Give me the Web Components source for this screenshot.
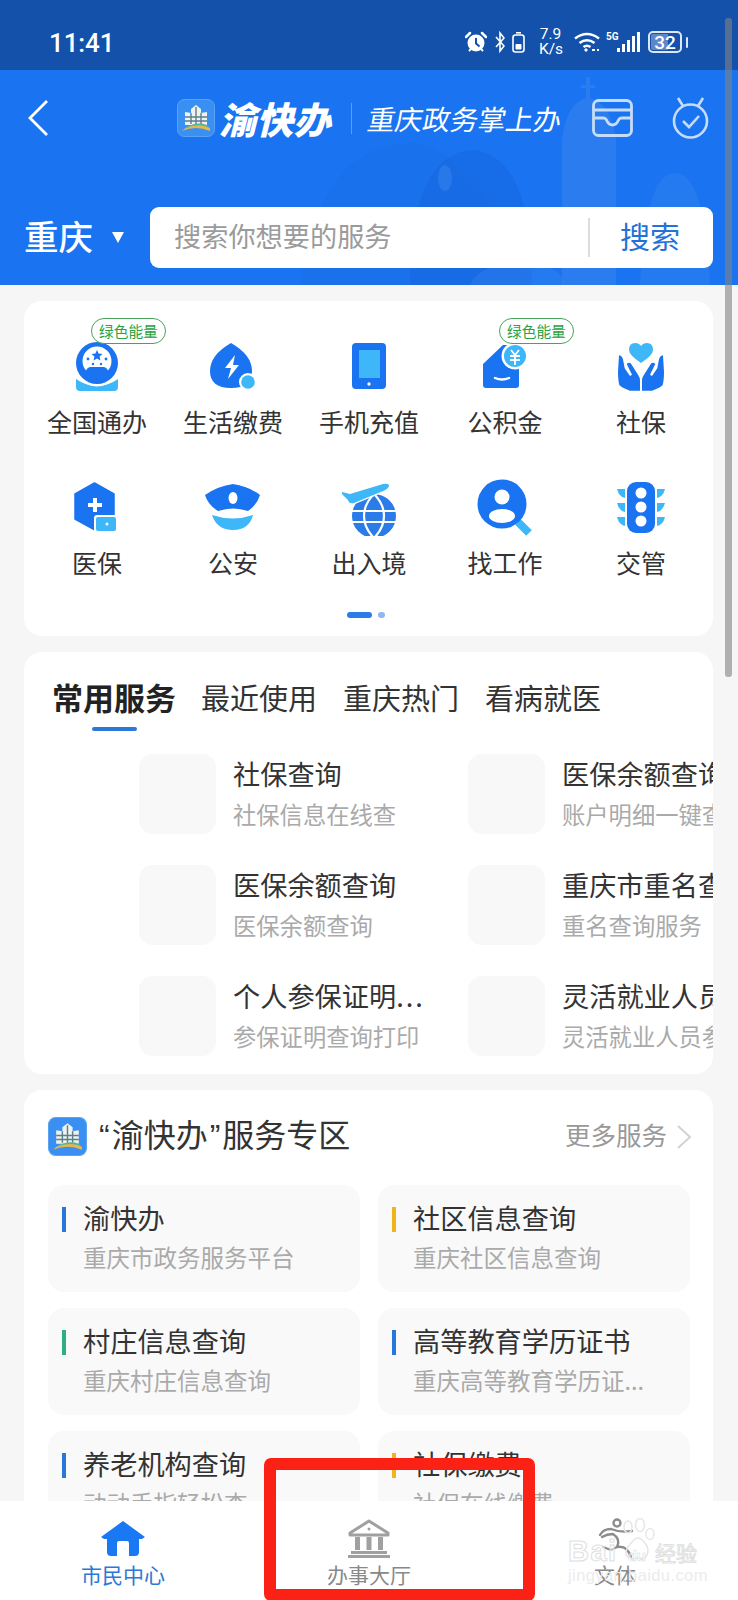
<!DOCTYPE html>
<html lang="zh">
<head>
<meta charset="utf-8">
<title>渝快办</title>
<style>
html, body { margin: 0; padding: 0; }
body { background: #f6f6f6; font-family: "Noto Sans CJK SC", "Noto Sans", sans-serif; color: #333; }
</style>
</head>
<body>
<phone-page>
  <status-bar></status-bar>
  <top-header></top-header>
  <page-main>
    <quick-card>
      <quick-item>
        <span slot="badge">绿色能量</span>
        <svg slot="icon" viewBox="0 0 60 60"><path d="M9 44q10 7 21 7t21-7v8q0 4-4 4H13q-4 0-4-4z" fill="#3db7f7"/><circle cx="30" cy="28" r="23.500" fill="#fff"/><circle cx="30" cy="28" r="21" fill="#1a73f0"/><circle cx="30" cy="26" r="14.500" fill="#fff"/><path d="M18 42q0-9 5-10h14q5 1 5 10-6 4-12 4t-12-4z" fill="#1a73f0"/><path d="M30 15l1.600 3.600 3.900.4-2.900 2.600.8 3.800-3.400-2-3.400 2 .8-3.800-2.900-2.600 3.900-.4z" fill="#1a73f0"/><circle cx="21" cy="24" r="1.400" fill="#1a73f0"/><circle cx="39" cy="24" r="1.400" fill="#1a73f0"/><circle cx="26" cy="29" r="1.200" fill="#1a73f0"/><circle cx="34" cy="29" r="1.200" fill="#1a73f0"/></svg>
        全国通办
      </quick-item>
      <quick-item>
        <svg slot="icon" viewBox="0 0 60 60"><path d="M28 8q21 12 21 28 0 17-21 17T7 36Q7 20 28 8z" fill="#1a73f0"/><path d="M32 20L22 33h6l-3 11 11-14h-6z" fill="#fff"/><circle cx="45" cy="47" r="9" fill="#fff"/><circle cx="45" cy="47" r="6.800" fill="#3db7f7"/></svg>
        生活缴费
      </quick-item>
      <quick-item>
        <svg slot="icon" viewBox="0 0 60 60"><rect x="13" y="8" width="34" height="46" rx="4" fill="#1a73f0"/><rect x="20" y="15" width="21" height="28" fill="#3db7f7"/><circle cx="30" cy="49" r="1.700" fill="#fff"/></svg>
        手机充值
      </quick-item>
      <quick-item>
        <span slot="badge">绿色能量</span>
        <svg slot="icon" viewBox="0 0 60 60"><path d="M8 29L28 10h16v40q0 3-3 3H11q-3 0-3-3z" fill="#1a73f0"/><path d="M20 43q7 3 14 0" fill="none" stroke="#fff" stroke-width="2.400" stroke-linecap="round"/><circle cx="40" cy="21" r="13.500" fill="#fff"/><circle cx="40" cy="21" r="11" fill="#3db7f7"/><path d="M36 15l4 5 4-5M35 21h10M35 25h10M40 20v10" fill="none" stroke="#fff" stroke-width="1.800"/></svg>
        公积金
      </quick-item>
      <quick-item>
        <svg slot="icon" viewBox="0 0 60 60"><path d="M30 28Q18 20 18 15q0-7 6-7 4 0 6 3 2-3 6-3 6 0 6 7 0 5-12 13z" fill="#3db7f7"/><path d="M8 20.300q3.500.5 4.300 5.400l1.400 7.600L19 41l2-1.300L15.700 29q2-2 4-.7L27 39.700q2 2.600 2 6v10h-10Q9.500 52 8.300 50 7 45 7 36.700z" fill="#1a73f0"/><path d="M52 20.300q-3.500.5-4.300 5.400l-1.400 7.600L41 41l-2-1.300L44.300 29q-2-2-4-.7L33 39.700q-2 2.600-2 6v10h10Q50.500 52 51.700 50 53 45 53 36.700z" fill="#1a73f0"/></svg>
        社保
      </quick-item>
      <quick-item>
        <svg slot="icon" viewBox="0 -2 60 60"><path d="M27.500 5L47 16v24l-19 12-20-11V16z" fill="#1a73f0" stroke="#1a73f0" stroke-width="1.500" stroke-linejoin="round"/><path d="M28 20v14M21 27h14" stroke="#fff" stroke-width="4"/><rect x="27" y="37" width="24" height="18" rx="3" fill="#fff"/><rect x="29" y="39" width="20" height="14" rx="2" fill="#3db7f7"/><circle cx="40" cy="46" r="1.500" fill="#fff"/></svg>
        医保
      </quick-item>
      <quick-item>
        <svg slot="icon" viewBox="0 -2 60 60"><path d="M30 6q15 2 27 11-3 10-12 16-15-5-30 0Q5 27 2 17 15 8 30 6z" fill="#1a73f0"/><ellipse cx="30" cy="20" rx="4.500" ry="6" fill="#fff"/><path d="M9 37q21 7 41 0-4 15-20 15T9 37z" fill="#3db7f7"/></svg>
        公安
      </quick-item>
      <quick-item>
        <svg slot="icon" viewBox="0 -2 60 60"><circle cx="35" cy="38" r="22" fill="#2b7be8"/><path d="M13 33h44M13 44h44M35 16q-10 10-10 22t10 22q10-10 10-22t-10-22z" fill="none" stroke="#fff" stroke-width="2.200"/><path d="M3 14l8 2 33-10q6-1 6 2-1 3-6 5L15 25q-5 1-6-3L3 16z" fill="#fff" stroke="#fff" stroke-width="2.500"/><path d="M3 14l8 2 33-10q6-1 6 2-1 3-6 5L15 25q-5 1-6-3L3 16z" fill="#3db7f7"/></svg>
        出入境
      </quick-item>
      <quick-item>
        <svg slot="icon" viewBox="0 -2 60 60"><path d="M43 44l11 11" stroke="#3db7f7" stroke-width="8"/><circle cx="27" cy="26" r="24.500" fill="#1a73f0"/><circle cx="27" cy="19" r="7.500" fill="#fff"/><ellipse cx="27" cy="38" rx="13" ry="7" fill="#fff"/></svg>
        找工作
      </quick-item>
      <quick-item>
        <svg slot="icon" viewBox="0 -2 60 60"><rect x="16" y="4" width="28" height="51" rx="9" fill="#1a73f0"/><circle cx="30" cy="15" r="5.500" fill="#fff"/><circle cx="30" cy="29" r="5.500" fill="#fff"/><circle cx="30" cy="43" r="5.500" fill="#fff"/><g fill="#3db7f7"><path d="M6 11h8v9q-6-1-8-9zM6 25h8v9q-6-1-8-9zM6 39h8v9q-6-1-8-9zM54 11h-8v9q6-1 8-9zM54 25h-8v9q6-1 8-9zM54 39h-8v9q6-1 8-9z"/></g></svg>
        交管
      </quick-item>
    </quick-card>

    <service-card>
      <service-row><span slot="title">社保查询</span><span slot="sub">社保信息在线查</span></service-row>
      <service-row><span slot="title">医保余额查询</span><span slot="sub">账户明细一键查询</span></service-row>
      <service-row><span slot="title">医保余额查询</span><span slot="sub">医保余额查询</span></service-row>
      <service-row><span slot="title">重庆市重名查询</span><span slot="sub">重名查询服务</span></service-row>
      <service-row><span slot="title">个人参保证明<span style="letter-spacing:2px">...</span></span><span slot="sub">参保证明查询打印</span></service-row>
      <service-row><span slot="title">灵活就业人员参保</span><span slot="sub">灵活就业人员参保查询</span></service-row>
    </service-card>

    <zone-card>
      <zone-tile style="--bar:#2878dc"><span slot="title">渝快办</span><span slot="sub">重庆市政务服务平台</span></zone-tile>
      <zone-tile style="--bar:#f0b41c"><span slot="title">社区信息查询</span><span slot="sub">重庆社区信息查询</span></zone-tile>
      <zone-tile style="--bar:#2fae7f"><span slot="title">村庄信息查询</span><span slot="sub">重庆村庄信息查询</span></zone-tile>
      <zone-tile style="--bar:#2878dc"><span slot="title">高等教育学历证书</span><span slot="sub">重庆高等教育学历证...</span></zone-tile>
      <zone-tile style="--bar:#2878dc"><span slot="title">养老机构查询</span><span slot="sub">动动手指轻松查</span></zone-tile>
      <zone-tile style="--bar:#f0b41c"><span slot="title">社保缴费</span><span slot="sub">社保在线缴费</span></zone-tile>
    </zone-card>
  </page-main>

  <tab-bar>
    <tab-item active>
      <svg slot="icon" width="44" height="36" viewBox="0 0 44 36" style="margin-bottom:2px"><path d="M22 0l22 16-3 2h-3v13q0 4-4 4h-6V22q0-2-2-2h-8q-2 0-2 2v13h-6q-4 0-4-4V18H3l-3-2z" fill="#1a78f5"/></svg>
      市民中心
    </tab-item>
    <tab-item>
      <svg slot="icon" width="44" height="40" viewBox="0 0 44 40" fill="#a0a0a0"><path d="M22 2l19 12v2H3v-2z" fill="none" stroke="#a0a0a0" stroke-width="3" stroke-linejoin="round"/><circle cx="22" cy="10" r="1.500"/><rect x="8" y="18" width="5" height="13"/><rect x="19.500" y="18" width="5" height="13"/><rect x="31" y="18" width="5" height="13"/><rect x="4" y="32" width="36" height="3"/><rect x="1" y="36" width="42" height="3"/></svg>
      办事大厅
    </tab-item>
    <tab-item>
      <svg slot="icon" width="44" height="42" viewBox="0 0 44 42" fill="none" stroke="#8c8c8c" stroke-width="2.400" stroke-linecap="round" stroke-linejoin="round"><circle cx="24" cy="6" r="3.500"/><path d="M7 18q3-6 11-6 10 4 21 2M9 20q5-3 11-3 8 5 4 13l-6 3-8-3M24 30q10-2 14 10"/></svg>
      文体
    </tab-item>
  </tab-bar>

  <baidu-mark></baidu-mark>
  <red-box></red-box>
  <scroll-thumb></scroll-thumb>
</phone-page>

<script>
function defineElement(name, html) {
  const template = document.createElement('template');
  template.innerHTML = html;
  customElements.define(name, class extends HTMLElement {
    constructor() {
      super();
      this.attachShadow({ mode: 'open' });
      this.shadowRoot.appendChild(template.content.cloneNode(true));
    }
  });
}

defineElement('phone-page', `
<style>
:host{ display: block; position: relative; width: 738px; height: 1600px; overflow: hidden; background: #f6f6f6; }
</style>
<slot></slot>`);

defineElement('status-bar', `
<style>
:host{ display: flex; align-items: center; height: 70px; padding: 0 50px 0 49px; box-sizing: border-box; background: #1351ab; color: #fff; font-family: Roboto, sans-serif; }
#time { font-size: 26px; font-weight: 500; letter-spacing: -.1px; margin-top: 15px; line-height: 30px; }
#icons { margin-left: auto; display: flex; align-items: center; margin-top: 14px; height: 24px; }
svg { display: block; }
#speed { margin: 0 12px 0 14px; width: 23px; font-size: 15.5px; line-height: 15px; text-align: center; }
#net { font-size: 10px; font-weight: 700; align-self: flex-start; margin: 2px 0 0 6px; line-height: 10px; width: 11px; }
#batt { position: relative; width: 34px; height: 22px; margin-left: 8px; border: 2px solid #dce8f8; border-radius: 5px; box-sizing: border-box; display: flex; align-items: center; justify-content: center; font-size: 19px; font-weight: 500; background: linear-gradient(90deg, #5f86c6 60%, transparent 60%); background-clip: content-box; padding: 1px; }
#tip { width: 2px; height: 11px; margin-left: 4px; background: #dce8f8; border-radius: 1px; }
</style>
<div id="time">11:41</div>
<div id="icons">
  <svg width="22" height="22" viewBox="0 0 22 22" style="margin-right:8px"><circle cx="11" cy="12" r="8.500" fill="#fff"/><path d="M11 7v5.500l3.500 3" fill="none" stroke="#1351ab" stroke-width="2"/><path d="M1 6l4-4M21 6l-4-4" stroke="#fff" stroke-width="2.500" stroke-linecap="round"/><path d="M4 20l2-2M18 20l-2-2" stroke="#fff" stroke-width="2"/></svg>
  <svg width="10" height="22" viewBox="0 0 10 22" style="margin-right:7px"><path d="M1 6l8 9-4 5V2l4 5-8 9" fill="none" stroke="#fff" stroke-width="1.600"/></svg>
  <svg width="13" height="22" viewBox="0 0 13 22"><rect x="1" y="4" width="11" height="17" rx="2.500" fill="none" stroke="#fff" stroke-width="1.600"/><rect x="4" y="1" width="5" height="1.600" fill="#fff"/><rect x="3.500" y="13" width="6" height="5.500" rx="1" fill="#fff"/></svg>
  <div id="speed">7.9<br>K/s</div>
  <svg width="26" height="20" viewBox="0 0 26 20" fill="none" stroke="#fff" stroke-width="2.600"><path d="M1 6.500q12-9 24 0M5.500 11q7.500-5.500 15 0M9.500 15q3.500-2.500 7 0"/><circle cx="12" cy="18" r="1.200" fill="#fff" stroke-width="1"/><path d="M18 18h3M23 18h2" stroke-width="1.800"/></svg>
  <div id="net">5G</div>
  <svg width="23" height="22" viewBox="0 0 23 22" fill="#fff"><rect x="0" y="17" width="3" height="4"/><rect x="5" y="13" width="3" height="8"/><rect x="10" y="9" width="3" height="12"/><rect x="15" y="5" width="3" height="16"/><rect x="20" y="1" width="3" height="20"/></svg>
  <div id="batt">32</div>
  <div id="tip"></div>
</div>`);

defineElement('app-logo', `
<style>
:host{ display: block; width: 38px; height: 38px; }
svg { display: block; width: 100%; height: 100%; }
</style>
<svg viewBox="0 0 38 38">
  <rect x=".5" y=".5" width="37" height="37" rx="7" fill="#3a90f2" stroke="#5ba4f5"/>
  <path d="M8 13l6 1V10l5-4 5 4v4l6-1v13H8z" fill="#eef3ee"/>
  <path d="M14 14v11M19 8v17M24 14v11M8 18h22M8 22h22" stroke="#5c7f8e" stroke-width="1.400" fill="none"/>
  <path d="M5 32q12-12 28-3v3q-14-6-28 0z" fill="#e8b64a"/>
  <path d="M9 29q10-7 21-3l2 2q-12-4-23 1z" fill="#4cb7a0"/>
</svg>`);

defineElement('top-header', `
<style>
:host{ display: block; position: relative; height: 215px; background: #1a73f0; color: #fff; overflow: hidden; }
#deco { position: absolute; left: 0; top: 0; }
#nav, #search { position: relative; display: flex; align-items: center; }
#nav { height: 48px; padding: 24px 29px 0 28px; }
#brand { display: flex; align-items: center; margin-left: 129px; }
#word { width: 112px; margin-left: 8px; font-size: 37px; font-weight: 900; line-height: 48px; letter-spacing: .3px; transform: skewX(-14deg); white-space: nowrap; }
#line { width: 1px; height: 31px; margin: 0 16px; background: rgba(255,255,255,.3); }
#slogan { font-size: 27.7px; line-height: 40px; white-space: nowrap; transform: skewX(-10deg); }
#wallet { margin-left: auto; }
#watch { margin-left: 39px; }
svg { display: block; }
#search { margin-top: 65px; height: 61px; padding: 0 25px 0 24px; }
#city { font-size: 34.5px; line-height: 57px; height: 61px; font-weight: 500; }
#arrow { width: 0; height: 0; margin-left: 19px; border: 6px solid transparent; border-top: 11px solid #fff; border-bottom: 0; }
#box { flex: 1; margin-left: 26px; height: 61px; display: flex; align-items: center; background: #fff; border-radius: 9px; }
#hint { flex: 1; padding: 0 0 6px 24px; font-size: 27.2px; color: #9b9b9b; }
#sep { width: 2px; height: 39px; background: #dcdcdc; }
#go { width: 123px; padding: 0 0 6px 30px; box-sizing: border-box; font-size: 30px; color: #2272d8; }
</style>
<svg id="deco" width="738" height="215" viewBox="0 70 738 215">
  <path d="M300 285q20-140 110-142 60 0 120 142z" fill="#1c6de6" opacity=".3"/>
  <path d="M410 285q0-130 62-135 60 5 60 135z" fill="#176ae2" opacity=".7"/>
  <ellipse cx="445" cy="178" rx="7" ry="13" fill="#3a86ee" opacity=".5"/>
  <path d="M470 285q10-22 50-22t45 22z" fill="#3a86ee" opacity=".35"/>
  <path d="M562 285V140q4-36 24-42v-10h-5v-3h5v-8h4v8h5v3h-5v10q22 6 26 42v145z" fill="#3a86ee" opacity=".5"/>
  <path d="M640 285q5-112 35-112t35 112z" fill="#3a86ee" opacity=".35"/>
</svg>
<div id="nav">
  <svg width="20" height="36" viewBox="0 0 20 36"><path d="M19 1L2 18l17 17" fill="none" stroke="#fff" stroke-width="2.800"/></svg>
  <div id="brand">
    <app-logo></app-logo>
    <div id="word">渝快办</div>
    <div id="line"></div>
    <div id="slogan">重庆政务掌上办</div>
  </div>
  <svg id="wallet" width="41" height="38" viewBox="0 0 41 38" fill="none" stroke="#c5dcfb" stroke-width="2.800"><rect x="1.500" y="1.500" width="38" height="35" rx="5"/><path d="M1.500 11h38M1.500 19h10q2 0 3 2 2 5 6 5t6-5q1-2 3-2h10"/></svg>
  <svg id="watch" width="37" height="42" viewBox="0 0 37 42" fill="none" stroke="#c5dcfb" stroke-width="2.600"><circle cx="18.500" cy="24" r="16.500"/><path d="M6 1l5 8M31 1l-5 8M11 24l6 6 10-11"/></svg>
</div>
<div id="search">
  <div id="city">重庆</div>
  <div id="arrow"></div>
  <div id="box">
    <div id="hint">搜索你想要的服务</div>
    <div id="sep"></div>
    <div id="go">搜索</div>
  </div>
</div>`);

defineElement('page-main', `
<style>
:host{ display: flex; flex-direction: column; gap: 16px; padding: 16px 25px 0 24px; }
</style>
<slot></slot>`);

defineElement('quick-card', `
<style>
:host{ display: block; height: 335px; box-sizing: border-box; padding: 34px 4px 0 5px; background: #fff; border-radius: 18px; }
#grid { display: grid; grid-template-columns: repeat(5, 136px); row-gap: 34px; }
#dots { display: flex; justify-content: center; gap: 6px; margin: 29px 0 0 -7px; }
#dots i { display: block; height: 6px; width: 7px; border-radius: 3px; background: #8fb8ee; }
#dots i:first-child { width: 25px; background: #2b7be8; }
</style>
<div id="grid"><slot></slot></div>
<div id="dots"><i></i><i></i></div>`);

defineElement('quick-item', `
<style>
:host{ display: flex; flex-direction: column; align-items: center; position: relative; height: 107px; font-size: 25px; line-height: 36px; color: #333; white-space: nowrap; }
::slotted([slot=icon]) { display: block; width: 60px; height: 60px; margin-bottom: 8px; }
#badge { position: absolute; left: 62px; top: -17px; z-index: 1; }
::slotted([slot=badge]) { display: block; height: 24px; padding: 0 7px; font-size: 14.7px; line-height: 23px; color: #2aa340; background: #fff; border: 1px solid #4aa35a; border-radius: 13px; }
</style>
<div id="badge"><slot name="badge"></slot></div>
<slot name="icon"></slot>
<slot></slot>`);

defineElement('service-card', `
<style>
:host{ display: block; height: 422px; box-sizing: border-box; padding-top: 25px; background: #fff; border-radius: 18px; overflow: hidden; }
#tabs { display: flex; padding-left: 28px; gap: 26px; font-size: 29px; line-height: 40px; color: #333; }
#on { display: flex; flex-direction: column; align-items: center; gap: 10px; margin-right: -1px; font-size: 31px; font-weight: 700; color: #222; }
#on i { display: block; width: 45px; height: 4px; border-radius: 2px; background: #2b78d8; }
#list { display: grid; grid-template-columns: 329px 329px; row-gap: 31px; margin: 23px 0 0 115px; width: 658px; }
</style>
<div id="tabs">
  <div id="on">常用服务<i></i></div>
  <div>最近使用</div>
  <div>重庆热门</div>
  <div>看病就医</div>
</div>
<div id="list"><slot></slot></div>`);

defineElement('service-row', `
<style>
:host{ display: flex; gap: 18px; height: 80px; white-space: nowrap; }
#tile { flex: none; width: 77px; height: 80px; border-radius: 14px; background: #f8f8f8; }
#title { margin: 1px 0 0 -1px; font-size: 27.2px; line-height: 36px; color: #333; }
#sub { margin: 8px 0 0 -1px; font-size: 23.3px; line-height: 30px; color: #aaa; }
</style>
<div id="tile"></div>
<div>
  <div id="title"><slot name="title"></slot></div>
  <div id="sub"><slot name="sub"></slot></div>
</div>`);

defineElement('zone-card', `
<style>
:host{ display: block; height: 520px; box-sizing: border-box; padding: 27px 23px 0 24px; background: #fff; border-radius: 18px; }
#head { display: flex; align-items: center; height: 39px; }
#title { margin: -4px 0 0 10px; font-size: 32px; line-height: 39px; color: #333; white-space: nowrap; }
#title b { font-family: "Liberation Sans", sans-serif; font-weight: 400; padding: 0 2px; }
#more { margin: -6px 0 0 auto; font-size: 25.5px; color: #999; }
#chev { margin: 0 -2px 0 9px; display: block; }
#grid { display: grid; grid-template-columns: 312px 312px; column-gap: 18px; row-gap: 16px; margin-top: 29px; }
app-logo { width: 39px; height: 39px; }
</style>
<div id="head">
  <app-logo></app-logo>
  <div id="title"><b>“</b>渝快办<b>”</b>服务专区</div>
  <div id="more">更多服务</div>
  <svg id="chev" width="16" height="24" viewBox="0 0 16 24"><path d="M2 1l12 11L2 23" fill="none" stroke="#d2d2d2" stroke-width="2"/></svg>
</div>
<div id="grid"><slot></slot></div>`);

defineElement('zone-tile', `
<style>
:host{ display: block; height: 107px; box-sizing: border-box; padding: 17px 0 0 14px; background: #f9f9f9; border-radius: 16px; white-space: nowrap; }
#top { display: flex; align-items: center; gap: 17px; height: 34px; font-size: 27.2px; color: #333; }
#top i { display: block; width: 4px; height: 25px; background: var(--bar); }
#name { margin-top: -4px; }
#sub { margin: 6px 0 0 21px; font-size: 23.5px; line-height: 30px; color: #aaa; }
</style>
<div id="top"><i></i><div id="name"><slot name="title"></slot></div></div>
<div id="sub"><slot name="sub"></slot></div>`);

defineElement('tab-bar', `
<style>
:host{ display: grid; grid-template-columns: repeat(3, 246px); position: absolute; left: 0; bottom: 0; width: 738px; height: 99px; background: #fff; }
</style>
<slot></slot>`);

customElements.define('tab-item', class extends HTMLElement {
  constructor() {
    super();
    this.attachShadow({ mode: 'open' });
    this.shadowRoot.innerHTML = `
<style>
:host{ display: flex; flex-direction: column; align-items: center; height: 99px; font-size: 21px; line-height: 30px; color: #888; white-space: nowrap; }
:host([active]) { color: #2c78d8; }
#icon { height: 39px; margin-top: 19px; display: flex; align-items: flex-end; }
</style>
<div id="icon"><slot name="icon"></slot></div>
<slot></slot>`;
  }
});

defineElement('baidu-mark', `
<style>
:host{ position: absolute; left: 568px; top: 1518px; width: 135px; height: 70px; font-family: "Liberation Sans", sans-serif; white-space: nowrap; }
#paw { position: absolute; left: 54px; top: 0; }
#row { position: absolute; left: 0; top: 18px; display: flex; align-items: baseline; color: rgba(255,255,255,.5); -webkit-text-stroke: 1px #e0e0e0; font-size: 29px; line-height: 30px; font-weight: 700; letter-spacing: 1.500px; }
#du { margin-left: 10px; font-size: 15px; letter-spacing: 0; -webkit-text-stroke: .5px #d8d8d8; }
#cn { margin-left: 9px; font-family: "Noto Sans CJK SC", sans-serif; font-size: 21px; font-weight: 400; letter-spacing: 0; }
#url { position: absolute; left: 0; top: 47px; font-size: 16.5px; line-height: 20px; letter-spacing: .4px; color: #ececec; }
</style>
<svg id="paw" width="46" height="46" viewBox="0 0 46 46" fill="none" stroke="#e6e6e6" stroke-width="1.500"><ellipse cx="6" cy="9" rx="4" ry="6"/><ellipse cx="18" cy="7" rx="4.500" ry="6.500"/><ellipse cx="28" cy="16" rx="4" ry="5.500"/><path d="M10 24q6-8 12 0 6 6 3 13-3 5-9 3-8 2-12-3-1-6 6-13z"/></svg>
<div id="row">Bai<span id="du">du</span><span id="cn">经验</span></div>
<div id="url">jingyan.baidu.com</div>`);

defineElement('red-box', `
<style>
:host{ position: absolute; left: 264px; top: 1458px; width: 271px; height: 143px; box-sizing: border-box; border: 12px solid #fb2215; border-radius: 7px; }
</style>`);

defineElement('scroll-thumb', `
<style>
:host{ position: absolute; left: 725px; top: 18px; width: 7px; height: 659px; border-radius: 3px; background: rgba(130,130,130,.6); }
</style>`);
</script>
</body>
</html>
